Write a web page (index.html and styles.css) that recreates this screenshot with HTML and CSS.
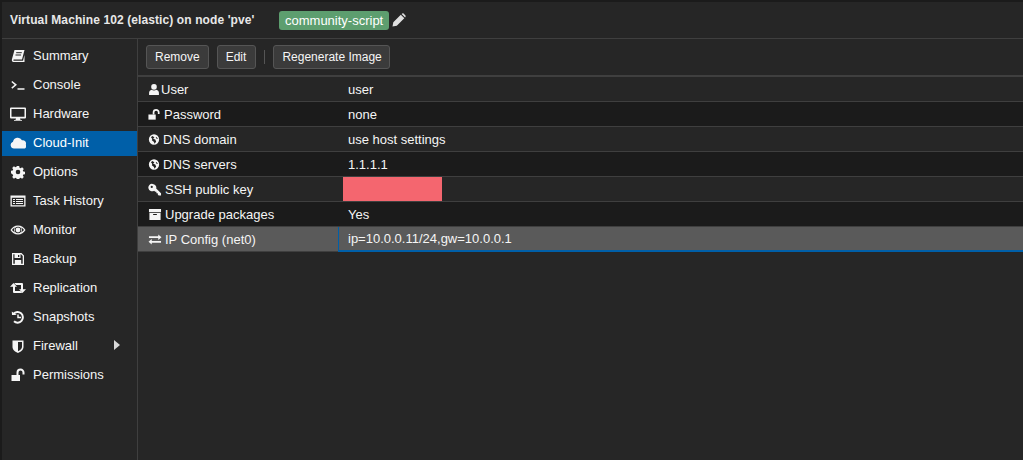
FILE: index.html
```html
<!DOCTYPE html>
<html lang="en">
<head>
<meta charset="utf-8">
<title>Cloud-Init</title>
<link rel="stylesheet" href="styles.css">
</head>
<body>
<div class="app">
  <header class="head">
    <span class="title">Virtual Machine 102 (elastic) on node 'pve'</span>
    <span class="tag">community-script</span>
    <svg class="pencil" viewBox="0 0 14 14"><path d="M.5 13.500l.8-4.300L8.800 1.700l3.500 3.500L4.800 12.700zM9.600.9l.7-.4a1 1 0 0 1 1.300.1l1.800 1.800a1 1 0 0 1 .1 1.300l-.4.700z"/></svg>
  </header>
  <div class="main">
    <nav class="side">
      <a class="item"><svg class="ico" viewBox="0 0 14 14"><path d="M3.500 1H13.500L11 10.500H3c-1 0-1 1.300 0 1.300h9L13.500 6v7H2.500C1 13 .5 11.500 1 10z"/><path class="cut" d="M5.200 3.700h5.600M4.500 6h5.600"/></svg><span>Summary</span></a>
      <a class="item"><svg class="ico" viewBox="0 0 14 14"><path class="line" d="M.8 3.500l4 3.300-4 3.300M6.500 11h7"/></svg><span>Console</span></a>
      <a class="item"><svg class="ico" viewBox="0 0 16 14"><path fill-rule="evenodd" d="M1 .5h14a1 1 0 0 1 1 1v9a1 1 0 0 1-1 1H10l.5 1.500h1.500v.7H4v-.7h1.500l.5-1.500H1a1 1 0 0 1-1-1v-9a1 1 0 0 1 1-1zM1.500 2v7.800h13V2z"/></svg><span>Hardware</span></a>
      <a class="item active"><svg class="ico" viewBox="0 0 16 14"><path d="M4 12.500a3.500 3.500 0 0 1-1-6.800 4.800 4.800 0 0 1 9-1.400 3.200 3.200 0 0 1 3.800 4.200 2.700 2.700 0 0 1-1 4z"/></svg><span>Cloud-Init</span></a>
      <a class="item"><svg class="ico" viewBox="0 0 14 14"><path fill-rule="evenodd" d="M5.800 1h2.400l.3 1.700 1.100.5 1.500-1 1.700 1.700-1 1.500.5 1.100 1.700.3v2.400l-1.700.3-.5 1.100 1 1.500-1.700 1.700-1.500-1-1.100.5-.3 1.700H5.800l-.3-1.700-1.100-.5-1.500 1-1.700-1.700 1-1.500-.5-1.100L0 8.200V5.800l1.700-.3.500-1.100-1-1.500 1.700-1.700 1.500 1 1.100-.5zM7 4.700a2.300 2.300 0 1 0 0 4.600 2.300 2.300 0 0 0 0-4.600z"/></svg><span>Options</span></a>
      <a class="item"><svg class="ico" viewBox="0 0 16 14"><path fill-rule="evenodd" d="M.5 1.500h15v11H.5zM1.800 3.800v7.400h12.400V3.800z"/><path class="tick" d="M3 5h2v1H3zm3 0h7v1H6zM3 7h2v1H3zm3 0h7v1H6zM3 9h2v1H3zm3 0h7v1H6z"/></svg><span>Task History</span></a>
      <a class="item"><svg class="ico" viewBox="0 0 16 14"><path fill-rule="evenodd" d="M8 2.500c3.300 0 6 2 7.500 4.500-1.500 2.500-4.200 4.500-7.500 4.500S2 9.500.5 7C2 4.500 4.700 2.500 8 2.500zM8 3.800a3.200 3.200 0 1 0 0 6.400 3.200 3.200 0 0 0 0-6.400zM2 7c.8 1 1.700 1.800 2.800 2.400a4.500 4.500 0 0 1 0-4.800C3.700 5.200 2.800 6 2 7zm12 0c-.8-1-1.700-1.800-2.800-2.400a4.500 4.500 0 0 1 0 4.800C12.300 8.800 13.200 8 14 7z"/><circle cx="8" cy="7" r="2.400"/></svg><span>Monitor</span></a>
      <a class="item"><svg class="ico" viewBox="0 0 14 14"><path fill-rule="evenodd" d="M1 1h9.500L13 3.500V13H1zM2.300 2.300v9.400h9.400V4L10 2.300H9.500V6h-6V2.300zM7 3v2h1.300V3zM3.800 8h6.400v3.700H3.800z"/></svg><span>Backup</span></a>
      <a class="item"><svg class="ico" viewBox="0 0 16 14"><path d="M3.500 2L7 5.800H5V10h5.500l1.800 2H4a1 1 0 0 1-1-1V5.800H0z"/><path d="M12.500 12L9 8.200h2V4H6L4.200 2H12a1 1 0 0 1 1 1v5.200h3z"/></svg><span>Replication</span></a>
      <a class="item"><svg class="ico" viewBox="0 0 14 14"><path class="line2" d="M2.500 4A5.300 5.300 0 1 1 3 11.300"/><path d="M.8 1.600L5.800 5H1z"/><path class="line3" d="M7 4.500V7.500H10"/></svg><span>Snapshots</span></a>
      <a class="item fw"><svg class="ico" viewBox="0 0 14 14"><path fill-rule="evenodd" d="M1.500 1.500h11v6.500c0 3-3 5-5.500 6-2.500-1-5.500-3-5.500-6zM7 3V12.300c1.800-.9 4-2.400 4-4.300V3z"/></svg><span>Firewall</span><i class="arrow"></i></a>
      <a class="item"><svg class="ico" viewBox="0 0 14 14"><path d="M.5 7h8.500v6H.5z"/><path class="line2" d="M6.500 7V4.500a3 3 0 0 1 6 0V6.500"/></svg><span>Permissions</span></a>
    </nav>
    <section class="panel">
      <div class="toolbar">
        <button class="btn">Remove</button>
        <button class="btn btn-edit">Edit</button>
        <i class="sep"></i>
        <button class="btn btn-regen">Regenerate Image</button>
      </div>
      <div class="grid">
        <div class="row"><div class="key"><svg class="ri user" viewBox="0 0 12 14"><path d="M6 1a3 3 0 0 1 3 3.200c0 1.500-.8 3-3 3s-3-1.500-3-3A3 3 0 0 1 6 1zM.7 13v-2.500C.7 9 2 7.800 3.400 7.400 4.200 8 5 8.200 6 8.200s1.800-.2 2.600-.8c1.400.4 2.700 1.600 2.700 3.100V13z"/></svg>User</div><div class="val">user</div></div>
        <div class="row alt"><div class="key"><svg class="ri lock" viewBox="0 0 14 14"><path d="M.5 7h8.500v6H.5z"/><path class="line2" d="M6.500 7V4.500a3 3 0 0 1 6 0V6.500"/></svg>Password</div><div class="val">none</div></div>
        <div class="row"><div class="key"><svg class="ri" viewBox="0 0 14 14"><path fill-rule="evenodd" d="M7 1a6 6 0 1 1 0 12A6 6 0 0 1 7 1zM5 3l-1.500 1.500L5 6.500 4.500 8 7 10l.5 2 2-2.500-1-2.500-2.500-1 1.500-1.500zM10 4l-1 1 1.500 1.500 1-.5z"/></svg>DNS domain</div><div class="val">use host settings</div></div>
        <div class="row alt"><div class="key"><svg class="ri" viewBox="0 0 14 14"><path fill-rule="evenodd" d="M7 1a6 6 0 1 1 0 12A6 6 0 0 1 7 1zM5 3l-1.500 1.500L5 6.500 4.500 8 7 10l.5 2 2-2.500-1-2.500-2.500-1 1.500-1.500zM10 4l-1 1 1.500 1.500 1-.5z"/></svg>DNS servers</div><div class="val">1.1.1.1</div></div>
        <div class="row"><div class="key"><svg class="ri wide" viewBox="0 0 14 14"><path fill-rule="evenodd" d="M4.500 1a4 4 0 0 1 3.800 5L13.500 11v2.500h-2.500L10 12.500V11H8.500V9.500H7.300L6 8.300A4 4 0 1 1 4.500 1zM3.500 3a1.200 1.200 0 1 0 0 2.400A1.200 1.200 0 0 0 3.500 3z"/></svg>SSH public key</div><div class="val redact-cell"><i class="redact"></i></div></div>
        <div class="row alt"><div class="key"><svg class="ri wide" viewBox="0 0 14 14"><path fill-rule="evenodd" d="M.5 1h13V4.500H.5zM1 5.300h12v7.700H1zM5 6.500v1h4v-1z"/></svg>Upgrade packages</div><div class="val">Yes</div></div>
        <div class="row sel"><div class="key"><svg class="ri wide" viewBox="0 0 14 14"><path d="M10.500 1.500L14 4.500l-3.500 3V5.500H.5v-2h10zM3.500 6.500v2h10v2h-10v2L0 9.500z"/></svg>IP Config (net0)</div><div class="val focus">ip=10.0.0.11/24,gw=10.0.0.1</div></div>
      </div>
    </section>
  </div>
</div>
</body>
</html>
```
FILE: styles.css
```css
* { box-sizing: border-box; }
html, body { margin: 0; height: 100%; }
body { background: #1b1b1b; font: 12px/16px "Liberation Sans", Arial, sans-serif; color: #f5f5f5; overflow: hidden; }
.app { margin: 2px 0 0 2px; height: 458px; background: #262626; display: flex; flex-direction: column; }
.head { height: 37px; flex: none; display: flex; align-items: center; padding-left: 8px; border-bottom: 1px solid #3f3f3f; }
.title { font-weight: bold; font-size: 12px; letter-spacing: .1px; color: #e8e8e8; width: 269px; }
.tag { background: #5d9e6f; color: #fff; font-size: 13px; line-height: 19px; padding: 0 6px; border-radius: 3px; }
.pencil { width: 14px; height: 14px; margin-left: 3px; fill: #e0e0e0; }
.main { flex: 1; display: flex; min-height: 0; }
.side { width: 136px; flex: none; border-right: 1px solid #3f3f3f; padding-top: 5px; }
.item { display: flex; align-items: center; height: 25px; margin-bottom: 4px; padding: 0 0 2px 8px; font-size: 13px; color: #f5f5f5; }
.item.active { background: #005fa8; color: #fff; }
.ico { width: 16px; height: 14px; fill: #f5f5f5; flex: none; margin-right: 7px; }
.line { fill: none; stroke: #f5f5f5; stroke-width: 1.500; }
.line2 { fill: none; stroke: #f5f5f5; stroke-width: 2; }
.line3 { fill: none; stroke: #f5f5f5; stroke-width: 1.500; }
.cut { fill: none; stroke: #262626; stroke-width: 1; }
.fw { position: relative; }
.arrow { position: absolute; left: 112px; top: 6px; border-left: 6px solid #d8d8d8; border-top: 5px solid transparent; border-bottom: 5px solid transparent; }
.panel { flex: 1; min-width: 0; }
.toolbar { height: 38px; display: flex; align-items: center; padding: 0 0 1px 8px; gap: 8px; border-bottom: 2px solid #3f3f3f; }
.btn { height: 24px; padding: 0 8px; background: #3b3b3b; border: 1px solid #555; border-radius: 3px; color: #f5f5f5; font: 12px "Liberation Sans", Arial, sans-serif; }
.btn-edit { padding-right: 9px; }
.btn-regen { padding-right: 7px; }
.sep { width: 1px; height: 14px; background: #555; }
.row { display: flex; height: 25px; border-bottom: 1px solid #3f3f3f; background: #262626; align-items: stretch; font-size: 13px; }
.row.alt { background: #1b1b1b; }
.row.sel { background: #5a5a5a; }
.key { width: 200px; padding: 1px 0 0 10px; display: flex; align-items: center; flex: none; }
.val { flex: 1; padding: 1px 0 0 10px; display: flex; align-items: center; }
.ri { width: 12px; height: 13px; fill: #f5f5f5; margin-right: 3px; flex: none; }
.ri.user { margin-right: 1px; }
.ri.lock { margin-right: 4px; }
.ri.wide { width: 14px; margin-right: 3px; }
.tick { fill: #f5f5f5; }
.redact-cell { padding: 0 0 0 5px; }
.redact { display: block; width: 99px; height: 24px; background: #f4666f; align-self: flex-start; }
.focus { border-left: 1px solid #005fa8; border-bottom: 2px solid #005fa8; margin-bottom: -1px; padding-left: 9px; }
```
